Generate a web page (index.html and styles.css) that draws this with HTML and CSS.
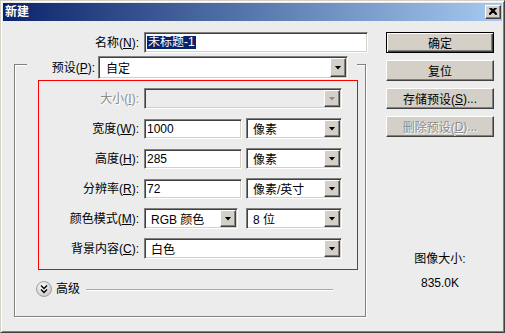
FILE: index.html
```html
<!DOCTYPE html>
<html lang="zh-CN">
<head>
<meta charset="utf-8">
<title>新建</title>
<link rel="stylesheet" href="styles.css">
</head>
<body>
<div class="window">
  <div class="titlebar">
    <span class="title">新建</span>
    <span class="close"><svg width="8" height="7" viewBox="0 0 8 7"><path d="M0.5 0 L7.5 7 M2 0 L8 6 M6 0 L0 6 M7.5 0 L0.5 7" stroke="#000" stroke-width="1.2" fill="none"/></svg></span>
  </div>
  <div class="client">
    <div class="left">
      <div class="name-row">
        <label class="lbl name-lbl">名称(<u>N</u>):</label>
        <div class="field name-field"><span class="sel">未标题-1</span></div>
      </div>
      <div class="preset-row">
        <label class="lbl preset-lbl">预设(<u>P</u>):</label>
        <div class="combo preset-combo"><span class="val">自定</span><span class="arrow"><i></i></span></div>
      </div>
      <div class="group">
        <div class="redbox">
          <div class="row">
            <label class="lbl dis">大小(<u>I</u>):</label>
            <div class="combo wide disabled"><span class="val"></span><span class="arrow"><i></i></span></div>
          </div>
          <div class="row">
            <label class="lbl">宽度(<u>W</u>):</label>
            <div class="field num"><span class="txt">1000</span></div>
            <div class="combo unit"><span class="val">像素</span><span class="arrow"><i></i></span></div>
          </div>
          <div class="row">
            <label class="lbl">高度(<u>H</u>):</label>
            <div class="field num"><span class="txt">285</span></div>
            <div class="combo unit"><span class="val">像素</span><span class="arrow"><i></i></span></div>
          </div>
          <div class="row">
            <label class="lbl">分辨率(<u>R</u>):</label>
            <div class="field num"><span class="txt">72</span></div>
            <div class="combo unit"><span class="val">像素/英寸</span><span class="arrow"><i></i></span></div>
          </div>
          <div class="row">
            <label class="lbl">颜色模式(<u>M</u>):</label>
            <div class="combo mode"><span class="val">RGB 颜色</span><span class="arrow"><i></i></span></div>
            <div class="combo bits"><span class="val">8 位</span><span class="arrow"><i></i></span></div>
          </div>
          <div class="row">
            <label class="lbl">背景内容(<u>C</u>):</label>
            <div class="combo wide"><span class="val">白色</span><span class="arrow"><i></i></span></div>
          </div>
        </div>
        <div class="adv">
          <svg class="adv-icon" width="16" height="16" viewBox="0 0 16 16"><defs><radialGradient id="g" cx="40%" cy="35%" r="70%"><stop offset="0" stop-color="#ffffff"/><stop offset="1" stop-color="#c4c4c4"/></radialGradient></defs><circle cx="8" cy="8" r="7.5" fill="url(#g)" stroke="#a0a0a0"/><path d="M5 4.5 L8 7.5 L11 4.5 M5 8.5 L8 11.5 L11 8.5" fill="none" stroke="#000" stroke-width="1.4"/></svg>
          <span class="adv-text">高级</span>
          <span class="adv-line"></span>
        </div>
      </div>
    </div>
    <div class="right">
      <div class="btn default">确定</div>
      <div class="btn">复位</div>
      <div class="btn">存储预设(<u>S</u>)...</div>
      <div class="btn disabled">删除预设(<u>D</u>)...</div>
      <div class="imgsize">
        <div class="is-label">图像大小:</div>
        <div class="is-value">835.0K</div>
      </div>
    </div>
  </div>
</div>
</body>
</html>
```

FILE: styles.css
```css
* { box-sizing: border-box; }
html, body { margin: 0; padding: 0; }
body {
  width: 505px;
  height: 333px;
  overflow: hidden;
  font-family: "Liberation Sans", "Noto Sans CJK SC", sans-serif;
  font-size: 12px;
  color: #000;
  background: #ECECEC;
}
u { text-decoration: underline; text-underline-offset: 1px; }

.window {
  width: 505px;
  height: 333px;
  background: #ECECEC;
  border: 1px solid;
  border-color: #D4D0C8 #404040 #404040 #D4D0C8;
  box-shadow: inset 1px 1px 0 #fff, inset -1px -1px 0 #808080;
  padding: 2px;
  display: flex;
  flex-direction: column;
}

.titlebar {
  height: 18px;
  flex: 0 0 18px;
  background: linear-gradient(to right, #0A246A, #A6CAF0);
  display: flex;
  align-items: center;
  justify-content: space-between;
  padding: 0 1px 0 2px;
}
.title {
  color: #fff;
  font-weight: bold;
  font-size: 12px;
  line-height: 14px;
}
.close {
  width: 16px;
  height: 14px;
  background: #D4D0C8;
  border: 1px solid;
  border-color: #fff #404040 #404040 #fff;
  box-shadow: inset -1px -1px 0 #808080;
  display: flex;
  align-items: center;
  justify-content: center;
  padding-bottom: 1px;
}
.close svg { display: block; }

.client {
  flex: 1;
  display: flex;
}
.left {
  width: 380px;
  flex: 0 0 380px;
  display: flex;
  flex-direction: column;
}

.lbl {
  text-align: right;
  white-space: nowrap;
  line-height: 14px;
}
.lbl.dis {
  color: #8c8c8c;
  text-shadow: 1px 1px 0 #fff;
}

/* sunken text field */
.field {
  height: 20px;
  background: #fff;
  border: 1px solid;
  border-color: #808080 #fff #fff #808080;
  box-shadow: inset 1px 1px 0 #404040, inset -1px -1px 0 #D4D0C8;
  display: flex;
  align-items: center;
  padding-left: 2px;
  white-space: nowrap;
}

.name-row {
  margin-top: 11px;
  display: flex;
  align-items: center;
  height: 21px;
}
.name-lbl { width: 136px; margin-right: 5px; }
.name-field { width: 224px; height: 21px; }
.sel {
  background: #0A246A;
  color: #fff;
  line-height: 13px;
  padding: 0 1px;
}

.preset-row {
  position: relative;
  z-index: 1;
  margin-top: 3px;
  margin-left: 24px;
  width: 330px;
  height: 23px;
  background: #ECECEC;
  display: flex;
  align-items: center;
}
.preset-lbl { width: 68px; margin-right: 3px; }

/* combo box */
.combo {
  height: 21px;
  background: #fff;
  border: 1px solid;
  border-color: #808080 #fff #fff #808080;
  box-shadow: inset 1px 1px 0 #404040, inset -1px -1px 0 #D4D0C8;
  display: flex;
  padding: 1px;
}
.combo .val {
  flex: 1;
  padding-left: 5px;
  display: flex;
  align-items: center;
  white-space: nowrap;
}
.combo .arrow {
  width: 16px;
  flex: 0 0 16px;
  background: #D4D0C8;
  border: 1px solid;
  border-color: #fff #404040 #404040 #fff;
  box-shadow: inset -1px -1px 0 #808080;
  display: flex;
  align-items: center;
  justify-content: center;
}
.combo .arrow i {
  display: block;
  width: 7px;
  height: 4px;
  background: #000;
  clip-path: polygon(0 0, 100% 0, 50% 100%);
}
.combo.disabled { background: #ECECEC; }
.combo.disabled .arrow i { background: #8c8c8c; }

.preset-combo { width: 250px; height: 23px; }
.preset-combo .val { padding-left: 6px; }

.group {
  margin-top: -15px;
  margin-left: 11px;
  width: 352px;
  height: 253px;
  border: 1px solid #808080;
  box-shadow: 1px 1px 0 #fff, inset 1px 1px 0 #fff;
  display: flex;
  flex-direction: column;
}

.redbox {
  margin-top: 15px;
  margin-left: 23px;
  width: 320px;
  height: 190px;
  border: 1px solid #FF0000;
  padding-top: 7px;
  display: flex;
  flex-direction: column;
  gap: 9px;
}
.row {
  height: 21px;
  display: flex;
  align-items: center;
}
.row .lbl { width: 100px; margin-right: 5px; }
.num { width: 98px; margin-right: 4px; }
.num .txt { padding-left: 0; }
.unit { width: 96px; }
.wide { width: 198px; }
.mode { width: 94px; margin-right: 8px; }
.bits { width: 96px; }

.adv {
  margin-top: 11px;
  margin-left: 21px;
  height: 16px;
  display: flex;
  align-items: center;
}
.adv-icon { display: block; flex: 0 0 16px; }
.adv-text { margin-left: 4px; width: 30px; line-height: 14px; }
.adv-line {
  width: 247px;
  height: 2px;
  border-top: 1px solid #A8A8A8;
  border-bottom: 1px solid #fff;
  margin-top: 1px;
}

.right {
  width: 108px;
  flex: 0 0 108px;
  margin-left: 3px;
  padding-top: 11px;
  display: flex;
  flex-direction: column;
  gap: 7px;
}
.btn {
  height: 21px;
  background: #D4D0C8;
  border: 1px solid;
  border-color: #fff #404040 #404040 #fff;
  box-shadow: inset -1px -1px 0 #808080, inset 1px 1px 0 #D4D0C8;
  display: flex;
  align-items: center;
  justify-content: center;
  white-space: nowrap;
}
.btn.default {
  border: 1px solid #000;
  box-shadow: inset 1px 1px 0 #fff, inset -1px -1px 0 #404040, inset -2px -2px 0 #808080;
}
.btn.disabled {
  color: #8c8c8c;
  text-shadow: 1px 1px 0 #fff;
}

.imgsize {
  margin-top: 108px;
  text-align: center;
  line-height: 14px;
}
.is-value { margin-top: 10px; }
```
